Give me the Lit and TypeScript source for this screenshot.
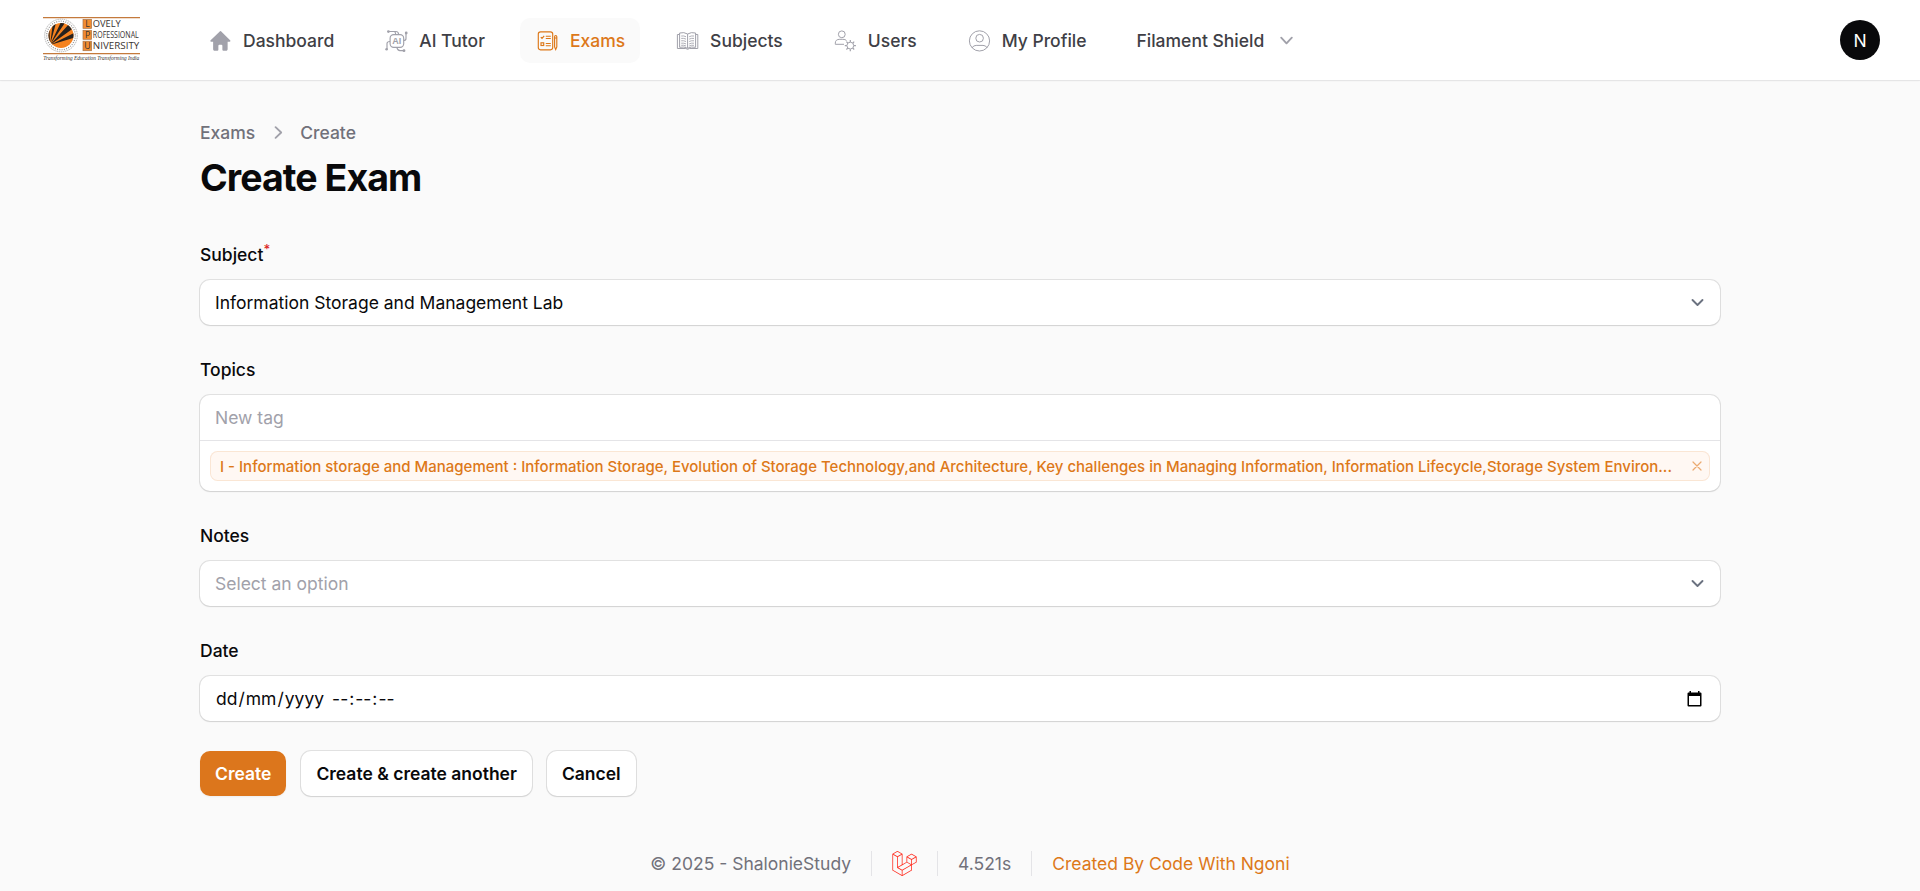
import { LitElement, html, svg, css } from "lit";
import { customElement } from "lit/decorators.js";

const icons = {
  home: svg`<svg viewBox="0 0 20 20" fill="currentColor"><path d="M10.8 2.9a1.1 1.1 0 0 0-1.6 0L2.1 9.800c-.5.5-.2 1.100.4 1.100h1.600V17c0 .7.5 1.200 1.200 1.200h2.200c.5 0 .8-.3.8-.8v-3.200c0-.5.3-.8.8-.8h1.600c.5 0 .8.3.8.8v3.200c0 .5.3.8.8.8h2.200c.7 0 1.200-.5 1.200-1.200v-6.100h1.600c.6 0 .9-.6.4-1.100z"/></svg>`,
  ai: svg`<svg viewBox="0 0 25 25" fill="none" stroke="currentColor" stroke-width="1.150"><rect x="6.100" y="6.600" width="13.600" height="12.800" rx="3.600"/><path d="M5 3.500h7q1.800 0 2.300 1.500l.4 1.500M10.500 3.500q1 .5 1.200 3M22 5.500v5q0 2-2.300 2M3 21v-5.500q0-2 3-2M20 22.600h-4q-2.500 0-3.200-3.200"/><g fill="currentColor" stroke="none"><circle cx="4.400" cy="3.600" r="1.400"/><circle cx="22.200" cy="5" r="1.400"/><circle cx="2.600" cy="21.200" r="1.300"/><circle cx="20" cy="22.700" r="1.400"/><text x="8.200" y="16.300" font-family="Liberation Sans, sans-serif" font-weight="700" font-size="9">AI</text></g></svg>`,
  exam: svg`<svg viewBox="0 0 25 25" fill="none" stroke="currentColor" stroke-width="1.150"><rect x="3.300" y="3.800" width="14.400" height="18" rx="2.200"/><path d="M5.800 9.200l1.200 1.200 2.200-2.600M10.800 8.200h5M10.800 10.500h5M10.800 15.500h5M10.800 17.700h5"/><rect x="6" y="14.800" width="2.700" height="2.700"/><path d="M19.600 8.700q0-1.200 1.100-1.200t1.100 1.200v10.300l-1.100 2.500-1.100-2.500zM19.600 10h2.200"/></svg>`,
  book: svg`<svg viewBox="0 0 25 25" fill="none" stroke="currentColor" stroke-width="1"><path d="M12.600 6q-3.600-2.200-8-1v14.300q4.600-1 8 1 3.400-2 8-1V5q-4.400-1.200-8 1v14M4.500 6.500H2.400v14h8.400l1.800.8 1.800-.8h8.400V6.500h-2.100"/><path stroke-width=".85" d="M6.200 8q2.500-.4 4.800.7M6.200 10.400q2.500-.4 4.800.7M6.200 12.800q2.500-.4 4.800.7M6.200 15.200q2.500-.4 4.800.7M6.200 17.300q2.500-.4 4.800.7M19 8q-2.500-.4-4.800.7M19 10.400q-2.500-.4-4.800.7M19 12.800q-2.500-.4-4.800.7M19 15.200q-2.500-.4-4.800.7M19 17.300q-2.500-.4-4.800.7"/></svg>`,
  users: svg`<svg viewBox="0 0 25 25" fill="none" stroke="currentColor" stroke-width="1"><circle cx="8.800" cy="6.300" r="3.400"/><path d="M11 16.300H2.300v-1.200q0-3.800 4.500-3.800h3q2.400 0 3.700 1.200"/><circle cx="17.300" cy="17.600" r="3.400"/><path stroke-width="1.200" d="M17.300 14v-2M17.300 23.200v-2M11.800 17.600h2M20.900 17.600h2M14.800 15.100l-1.400-1.400M19.800 15.100l1.400-1.400M14.800 20.100l-1.400 1.400M19.800 20.100l1.400 1.400"/></svg>`,
  profile: svg`<svg viewBox="0 0 25 25" fill="none" stroke="currentColor" stroke-width="1"><circle cx="12.500" cy="12.900" r="10.100"/><circle cx="12.600" cy="10.200" r="3.800"/><path d="M5.200 19.900q.8-2.500 4-2.500h6.800q3.200 0 4 2.500"/></svg>`,
  down: svg`<svg viewBox="0 0 20 20" fill="currentColor"><path fill-rule="evenodd" d="M5.230 7.210a.75.750 0 0 1 1.060.020L10 11.168l3.710-3.938a.75.750 0 1 1 1.080 1.040l-4.250 4.500a.75.750 0 0 1-1.080 0l-4.250-4.500a.75.750 0 0 1 .020-1.060Z"/></svg>`,
  right: svg`<svg viewBox="0 0 20 20" fill="currentColor"><path fill-rule="evenodd" d="M7.910 14.770a.75.750 0 0 1 .020-1.060L11.868 10 7.930 6.290a.75.750 0 1 1 1.040-1.080l4.500 4.250a.75.750 0 0 1 0 1.080l-4.500 4.250a.75.750 0 0 1-1.060-.020Z"/></svg>`,
  chevron: svg`<svg viewBox="0 0 20 20" fill="none" stroke="#6b7280" stroke-width="1.500" stroke-linecap="round" stroke-linejoin="round"><path d="M6 8l4 4 4-4"/></svg>`,
  close: svg`<svg viewBox="0 0 10 10" fill="none" stroke="currentColor" stroke-width="1.200" stroke-linecap="round"><path d="M1 1l8 8M9 1l-8 8"/></svg>`,
  calendar: svg`<svg class="cal" viewBox="0 0 15 16" fill="#000"><path fill-rule="evenodd" d="M2.500 0h1.500v1.500h7V0h1.500v1.500h.9q1.100 0 1.100 1.100v11.800q0 1.100-1.100 1.100H1.600q-1.100 0-1.100-1.100V2.600q0-1.100 1.100-1.100h.9zM2 5v9h11V5z"/></svg>`,
  laravel: svg`<svg viewBox="0 0 24 24" fill="#ff2d20"><path d="M23.642 5.43a.364.364 0 01.014.1v5.149c0 .135-.073.26-.189.326l-4.323 2.49v4.934a.378.378 0 01-.188.326L9.93 23.949a.316.316 0 01-.066.027c-.008.002-.016.008-.024.01a.348.348 0 01-.192 0c-.011-.002-.02-.008-.03-.012-.02-.008-.042-.014-.062-.025L.533 18.755a.376.376 0 01-.189-.326V2.974c0-.033.005-.066.014-.098.003-.012.01-.02.014-.032a.369.369 0 01.023-.058c.004-.013.015-.022.023-.033l.033-.045c.012-.01.025-.018.037-.027.014-.012.027-.024.041-.034H.53L5.043.05a.375.375 0 01.375 0L9.93 2.647h.002c.015.01.027.021.04.033l.038.027c.013.014.02.03.033.045.008.011.02.021.025.033.01.02.017.038.024.058.003.011.01.021.013.032.01.031.014.064.014.098v9.652l3.76-2.164V5.527c0-.033.004-.066.013-.098.003-.01.01-.02.013-.032a.487.487 0 01.024-.059c.007-.012.018-.02.025-.033.012-.015.021-.03.033-.043.012-.012.025-.02.037-.028.014-.01.026-.023.041-.032h.001l4.513-2.598a.375.375 0 01.375 0l4.513 2.598c.016.01.027.021.042.031.012.01.025.018.036.028.013.014.022.03.034.044.008.012.019.021.024.033.011.02.018.04.024.06.006.01.012.021.015.032zm-.74 5.032V6.179l-1.578.908-2.182 1.256v4.283zm-4.51 7.75v-4.287l-2.147 1.225-6.126 3.498v4.325zM1.093 3.624v14.588l8.273 4.761v-4.325l-4.322-2.445-.002-.003H5.04c-.014-.01-.025-.021-.04-.031-.011-.01-.024-.018-.035-.027l-.001-.002c-.013-.012-.021-.025-.031-.04-.01-.011-.021-.022-.028-.036h-.003c-.008-.014-.013-.031-.02-.047-.006-.016-.014-.027-.018-.043a.49.49 0 01-.008-.057c-.002-.014-.006-.027-.006-.041V5.789l-2.18-1.257zM5.23.81L1.47 2.974l3.76 2.164 3.758-2.164zm1.956 13.505l2.182-1.256V3.624l-1.58.91-2.182 1.255v9.435zm11.581-10.95l-3.76 2.163 3.76 2.163 3.759-2.164zm-.376 4.978L16.21 7.087 14.63 6.18v4.283l2.182 1.256 1.58.908zm-8.65 9.654l5.514-3.148 2.756-1.572-3.757-2.163-4.323 2.489-3.941 2.27z"/></svg>`,
};

const logo = svg`<svg class="logo" viewBox="0 0 97 46">
  <path d="M0 .6h97M0 36.700h97" stroke="#c47a3c" stroke-width="1.200"/>
  <circle cx="18" cy="18.500" r="16.300" fill="#fff" stroke="#888" stroke-width=".6" stroke-dasharray="1.500 .7"/>
  <circle cx="18" cy="18.500" r="14.300" fill="none" stroke="#999" stroke-width="1.300" stroke-dasharray="1 1.300"/>
  <clipPath id="ball"><circle cx="18" cy="18.500" r="12.500"/></clipPath>
  <circle cx="18" cy="18.500" r="12.500" fill="#f5821f"/>
  <path clip-path="url(#ball)" fill="#26211e" d="M7 28L9.500 9 13 6zM7 28L18 5 22.500 5zM7 28L26 7 30 11.500zM7 28L31 16 31.500 20.500zM7 28L4 19 6.500 13z"/>
  <g fill="#f28c30" stroke="#a8744a" stroke-width=".7"><rect x="40" y="2.400" width="8.600" height="9"/><rect x="40" y="13.300" width="8.600" height="9"/><rect x="40" y="24.200" width="8.600" height="9.500"/></g>
  <g font-family="Open Sans, sans-serif" font-size="8.800" fill="#3a3432">
    <text x="42.300" y="10">L</text><text x="42" y="21">P</text><text x="41.300" y="32.300">U</text>
    <text x="49.800" y="10" textLength="28" lengthAdjust="spacingAndGlyphs">OVELY</text>
    <text x="49.800" y="21" textLength="46" lengthAdjust="spacingAndGlyphs">ROFESSIONAL</text>
    <text x="49.800" y="32.300" textLength="46.500" lengthAdjust="spacingAndGlyphs">NIVERSITY</text>
  </g>
  <text x=".3" y="43.400" font-family="Liberation Serif, serif" font-style="italic" font-size="6" fill="#333" textLength="96" lengthAdjust="spacingAndGlyphs">Transforming Education Transforming India</text>
</svg>`;

const nav = [
  { label: "Dashboard", icon: icons.home },
  { label: "AI Tutor", icon: icons.ai },
  { label: "Exams", icon: icons.exam, active: true },
  { label: "Subjects", icon: icons.book },
  { label: "Users", icon: icons.users },
  { label: "My Profile", icon: icons.profile },
];

@customElement("app-root")
export class AppRoot extends LitElement {
  static styles = css`
    :host { display: flex; flex-direction: column; min-height: 891px; box-sizing: border-box; background: #fafafa; color: #09090b; font: 400 17.5px/25px Inter, sans-serif; }
    * { box-sizing: border-box; }
    svg { display: block; flex: none; overflow: visible; }
    .top { display: flex; align-items: center; height: 80px; padding: 0 40px; background: #fff; box-shadow: 0 0 0 1px rgba(9,9,11,.05), 0 1px 2px rgba(0,0,0,.05); }
    .logo { width: 97px; height: 46px; margin: 0 53px 0 3px; }
    .nav { display: flex; gap: 20px; }
    .item { display: flex; align-items: center; gap: 10px; height: 45px; padding: 0 15px; border-radius: 10px; font-weight: 500; color: #3f3f46; white-space: nowrap; }
    .item svg { width: 25px; height: 25px; color: #a1a1aa; }
    .active { background: #fafafa; }
    .active, .item.active svg { color: #dd7819; }
    .avatar { display: grid; place-items: center; width: 40px; height: 40px; margin-left: auto; border-radius: 50%; background: #09090b; color: #fff; }
    .main { display: flex; flex-direction: column; width: 1520px; margin: 0 auto; padding-top: 40px; }
    .crumbs { display: flex; align-items: center; gap: 10px; font-weight: 500; color: #71717a; margin-bottom: 10px; }
    .crumbs svg { width: 25px; height: 25px; color: #a1a1aa; }
    h1 { margin: 0 0 40px; font-size: 37.5px; line-height: 45px; font-weight: 700; letter-spacing: -.025em; }
    .form { display: flex; flex-direction: column; gap: 30px; }
    .field { display: flex; flex-direction: column; gap: 10px; }
    .label { line-height: 30px; font-weight: 500; height: 30px; }
    .label sup { color: #dc2626; line-height: 0; font-size: 13.1px; vertical-align: baseline; position: relative; top: -.5em; }
    .box { border-radius: 10px; background: #fff; box-shadow: 0 0 0 1px rgba(9,9,11,.1), 0 1px 2px rgba(0,0,0,.07); }
    .row { display: flex; align-items: center; justify-content: space-between; height: 45px; padding: 0 10px 0 15px; }
    .row svg { width: 25px; height: 25px; }
    .row svg.cal { width: 15px; height: 16px; margin-right: 8.500px; }
    .muted { color: #a1a1aa; }
    .tags { border-top: 1px solid #e4e4e7; padding: 10px; }
    .tag { display: flex; align-items: center; justify-content: space-between; height: 30px; padding: 0 8.500px 0 10px; border-radius: 7.500px; background: #fff8f3; box-shadow: inset 0 0 0 1px rgba(221,120,25,.14); color: #dd7819; font-size: 15px; font-weight: 500; white-space: nowrap; }
    .tag svg { width: 10px; height: 10px; opacity: .6; }
    .date { display: flex; }
    .date span { padding: 0 1px; }
    .time { margin-left: 6px; }
    .actions { display: flex; gap: 15px; }
    .btn { border: 0; font: inherit; font-weight: 600; height: 45px; padding: 0 15px; border-radius: 10px; background: #fff; color: #09090b; box-shadow: 0 0 0 1px rgba(9,9,11,.1), 0 1px 2px rgba(0,0,0,.07); }
    .primary { background: #dc761c; color: #fff; box-shadow: 0 1px 2px rgba(0,0,0,.05); }
    .foot { display: flex; justify-content: center; gap: 20px; height: 25px; margin-top: 55px; padding-left: 20px; color: #71717a; }
    .foot svg { width: 25px; height: 25px; }
    .sep { width: 1px; background: #e4e4e7; }
    .link { color: #dd7819; }
  `;

  private select(label: string, value: string, placeholder = false, required = false) {
    return html`<div class="field">
      <div class="label">${label}${required ? html`<sup>*</sup>` : ""}</div>
      <div class="box row"><span class=${placeholder ? "muted" : ""}>${value}</span>${icons.chevron}</div>
    </div>`;
  }

  render() {
    return html`
      <header class="top">
        ${logo}
        <nav class="nav">
          ${nav.map((n) => html`<a class="item ${n.active ? "active" : ""}">${n.icon}<span>${n.label}</span></a>`)}
          <a class="item"><span>Filament Shield</span>${icons.down}</a>
        </nav>
        <div class="avatar">N</div>
      </header>
      <main class="main">
        <div class="crumbs"><span>Exams</span>${icons.right}<span>Create</span></div>
        <h1>Create Exam</h1>
        <div class="form">
          ${this.select("Subject", "Information Storage and Management Lab", false, true)}
          <div class="field">
            <div class="label">Topics</div>
            <div class="box">
              <div class="row"><span class="muted">New tag</span></div>
              <div class="tags"><div class="tag"><span>I - Information storage and Management : Information Storage, Evolution of Storage Technology,and Architecture, Key challenges in Managing Information, Information Lifecycle,Storage System Environ...</span>${icons.close}</div></div>
            </div>
          </div>
          ${this.select("Notes", "Select an option", true)}
          <div class="field">
            <div class="label">Date</div>
            <div class="box row">
              <div class="date"><span>dd</span>/<span>mm</span>/<span>yyyy</span><span class="time">--</span>:<span>--</span>:<span>--</span></div>
              ${icons.calendar}
            </div>
          </div>
          <div class="actions">
            <button class="btn primary">Create</button>
            <button class="btn">Create &amp; create another</button>
            <button class="btn">Cancel</button>
          </div>
        </div>
      </main>
      <footer class="foot">
        <span>© 2025 - ShalonieStudy</span><span class="sep"></span>${icons.laravel}<span class="sep"></span><span>4.521s</span><span class="sep"></span><span class="link">Created By Code With Ngoni</span>
      </footer>`;
  }
}
